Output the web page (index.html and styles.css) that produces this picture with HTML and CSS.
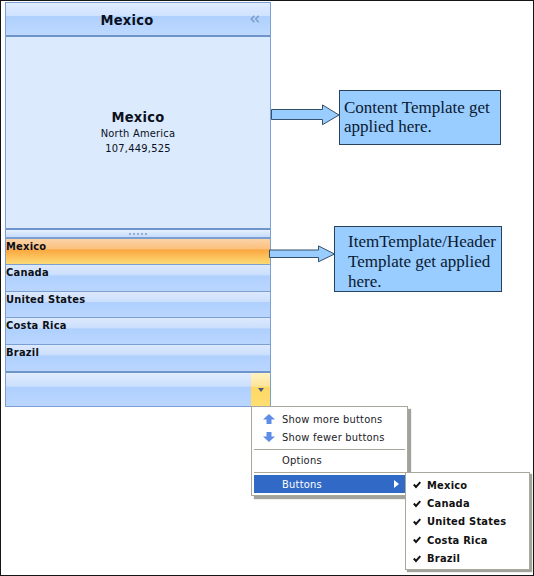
FILE: index.html
```html
<!DOCTYPE html>
<html lang="en">
<head>
<meta charset="utf-8">
<title>Outlook bar templates</title>
<link rel="stylesheet" href="styles.css">
</head>
<body>
<main class="canvas">
  <section class="bar">
    <header class="bar-header"><h1>Mexico</h1>
      <svg class="collapse" width="10" height="8" viewBox="0 0 10 8"><path d="M4.3 .8 1.3 4l3 3.2M8.7 .8 5.7 4l3 3.2"/></svg>
    </header>
    <div class="content">
      <h2>Mexico</h2>
      <p>North America</p>
      <p>107,449,525</p>
    </div>
    <div class="splitter"><i></i><i></i><i></i><i></i><i></i></div>
    <ul class="items">
      <li class="selected"><span>Mexico</span></li>
      <li><span>Canada</span></li>
      <li><span>United States</span></li>
      <li><span>Costa Rica</span></li>
      <li><span>Brazil</span></li>
    </ul>
    <footer class="bar-footer">
      <button class="overflow" aria-label="Configure buttons"><svg width="6" height="4" viewBox="0 0 6 4"><path d="M0 0h6L3 4z"/></svg></button>
    </footer>
  </section>

  <svg class="arrow arrow-content" width="70" height="22" viewBox="0 0 70 22"><path d="M.5 5.5h51V.9L68 11 51.5 20.700V15.500H.5z"/></svg>
  <p class="note note-content"><span>Content Template get</span><span>applied here.</span></p>

  <svg class="arrow arrow-item" width="67" height="18" viewBox="0 0 67 18"><path d="M.5 5h49V.9L65.500 9 49.500 16.800V12.500H.5z"/></svg>
  <p class="note note-item"><span>ItemTemplate/Header</span><span>Template get applied</span><span>here.</span></p>

  <div class="menu options-menu">
    <div class="entry"><svg class="dir" width="12" height="10" viewBox="0 0 12 10"><path d="M6 0l6 5.500H8.500V10h-5V5.500H0z"/></svg><span>Show more buttons</span></div>
    <div class="entry"><svg class="dir" width="12" height="10" viewBox="0 0 12 10"><path d="M6 10l6-5.500H8.500V0h-5v4.500H0z"/></svg><span>Show fewer buttons</span></div>
    <hr>
    <div class="entry plain short"><span>Options</span></div>
    <hr>
    <div class="entry plain active"><span>Buttons</span><svg class="more" width="5" height="8" viewBox="0 0 5 8"><path d="M0 0l5 4-5 4z"/></svg></div>
  </div>
  <div class="menu buttons-menu">
    <div class="check"><svg width="8" height="8" viewBox="0 0 8 8"><path d="M.8 3.500 3 6 7.300 1.200"/></svg><span>Mexico</span></div>
    <div class="check"><svg width="8" height="8" viewBox="0 0 8 8"><path d="M.8 3.500 3 6 7.300 1.200"/></svg><span>Canada</span></div>
    <div class="check"><svg width="8" height="8" viewBox="0 0 8 8"><path d="M.8 3.500 3 6 7.300 1.200"/></svg><span>United States</span></div>
    <div class="check"><svg width="8" height="8" viewBox="0 0 8 8"><path d="M.8 3.500 3 6 7.300 1.200"/></svg><span>Costa Rica</span></div>
    <div class="check"><svg width="8" height="8" viewBox="0 0 8 8"><path d="M.8 3.500 3 6 7.300 1.200"/></svg><span>Brazil</span></div>
  </div>
</main>
</body>
</html>
```
FILE: styles.css
```css
* { box-sizing: border-box; margin: 0; padding: 0; }
body { background: #fff; color: #0b1020; font: 11px/15px "DejaVu Sans Condensed", "DejaVu Sans", sans-serif; font-stretch: condensed; letter-spacing: .23px; }
svg { display: block; flex: none; }
span { white-space: nowrap; }
.canvas { position: relative; width: 534px; height: 576px; border: 1px solid #151515; padding: 1px 0 0 4px; overflow: hidden; }

.bar { width: 266px; height: 405px; border: 1px solid #7b9fd3; display: flex; flex-direction: column; }
.bar-header { position: relative; height: 34px; display: flex; align-items: center; justify-content: center; padding-right: 22px; border-bottom: 2px solid #6f94c9; background: linear-gradient(#e0ecff 0, #cfe2ff 40%, #afd0fd 41%, #bdd9ff 100%); }
.bar-header h1 { font-size: 14.500px; letter-spacing: .3px; line-height: 20px; padding-top: 2px; }
.collapse { position: absolute; right: 10px; top: 12px; fill: none; stroke: #7c9cc9; stroke-width: 1.500; }
.content { height: 191px; padding-top: 72px; background: #dbeafd; text-align: center; }
.content h2 { font-size: 14.500px; letter-spacing: .3px; line-height: 17px; }
.content p { line-height: 15px; }
.splitter { height: 11px; border-top: 2px solid #6f94c9; border-bottom: 2px solid #7b9fd3; background: linear-gradient(#e5f0ff, #c5dcfb); display: flex; justify-content: center; gap: 2px; padding-top: 3px; }
.splitter i { width: 2px; height: 2px; background: #94acd0; }
.items { list-style: none; font-weight: bold; display: grid; grid-template-rows: 26px 27px 26px 27px 28px; }
.items li { line-height: 15px; color: #0a0f18; border-bottom: 1px solid #7b9fd3; background: linear-gradient(#dce9fd 0, #cbdffd 38%, #afd0fd 42%, #bad6ff 100%); }
.items li:last-child { border-bottom: 2px solid #6f94c9; }
.items .selected { background: linear-gradient(#fbd3a6 0, #fcc180 38%, #fba840 44%, #fddb77 100%); }
.bar-footer { flex: 1; display: flex; justify-content: flex-end; background: linear-gradient(#e0ecff 0, #cbdffd 40%, #afd0fd 43%, #bad6ff 100%); }
.overflow { width: 19px; border: 0; display: flex; align-items: center; justify-content: center; background: linear-gradient(#fff3c2 0, #ffe49a 40%, #ffd763 43%, #ffdf72 100%); fill: #465c80; }

.arrow { position: absolute; fill: #99ccff; stroke: #35506b; stroke-width: 1; }
.arrow-content { left: 270px; top: 103px; }
.arrow-item { left: 268px; top: 244px; }
.note { position: absolute; border: 1px solid #28435e; background: #99ccff; color: #0a1a30; font: 17px/19px "Liberation Serif", serif; letter-spacing: 0; }
.note span { display: block; }
.note-content { left: 338px; top: 89px; width: 162px; height: 55px; padding: 7px 0 0 4px; }
.note-item { left: 333px; top: 225px; width: 168px; height: 66px; padding: 5px 0 0 13px; line-height: 20px; }

.menu { position: absolute; background: #fff; border: 1px solid #a9a99b; box-shadow: 3px 3px 1px #a3a39e; color: #1b1b1f; }
.options-menu { left: 250px; top: 405px; width: 157px; height: 90px; padding: 3px 2px; }
.entry { height: 18px; display: flex; align-items: center; gap: 7px; padding-left: 9px; }
.dir { fill: #5f8de6; }
.menu hr { border: 0; height: 1px; background: #a9a79b; margin: 3px 0 2px; }
.plain { padding-left: 28px; }
.short { height: 17px; }
.active { background: #3169c6; color: #fff; }
.more { margin-left: auto; margin-right: 6px; fill: #fff; }
.buttons-menu { left: 404px; top: 471px; width: 125px; height: 98px; padding: 3px 5px; font-weight: bold; color: #111; box-shadow: 2px 2px 1px #a3a39e; }
.check { height: 18.400px; display: flex; align-items: center; gap: 6px; padding-left: 2px; }
.check svg { fill: none; stroke: #111; stroke-width: 1.900; }
```
